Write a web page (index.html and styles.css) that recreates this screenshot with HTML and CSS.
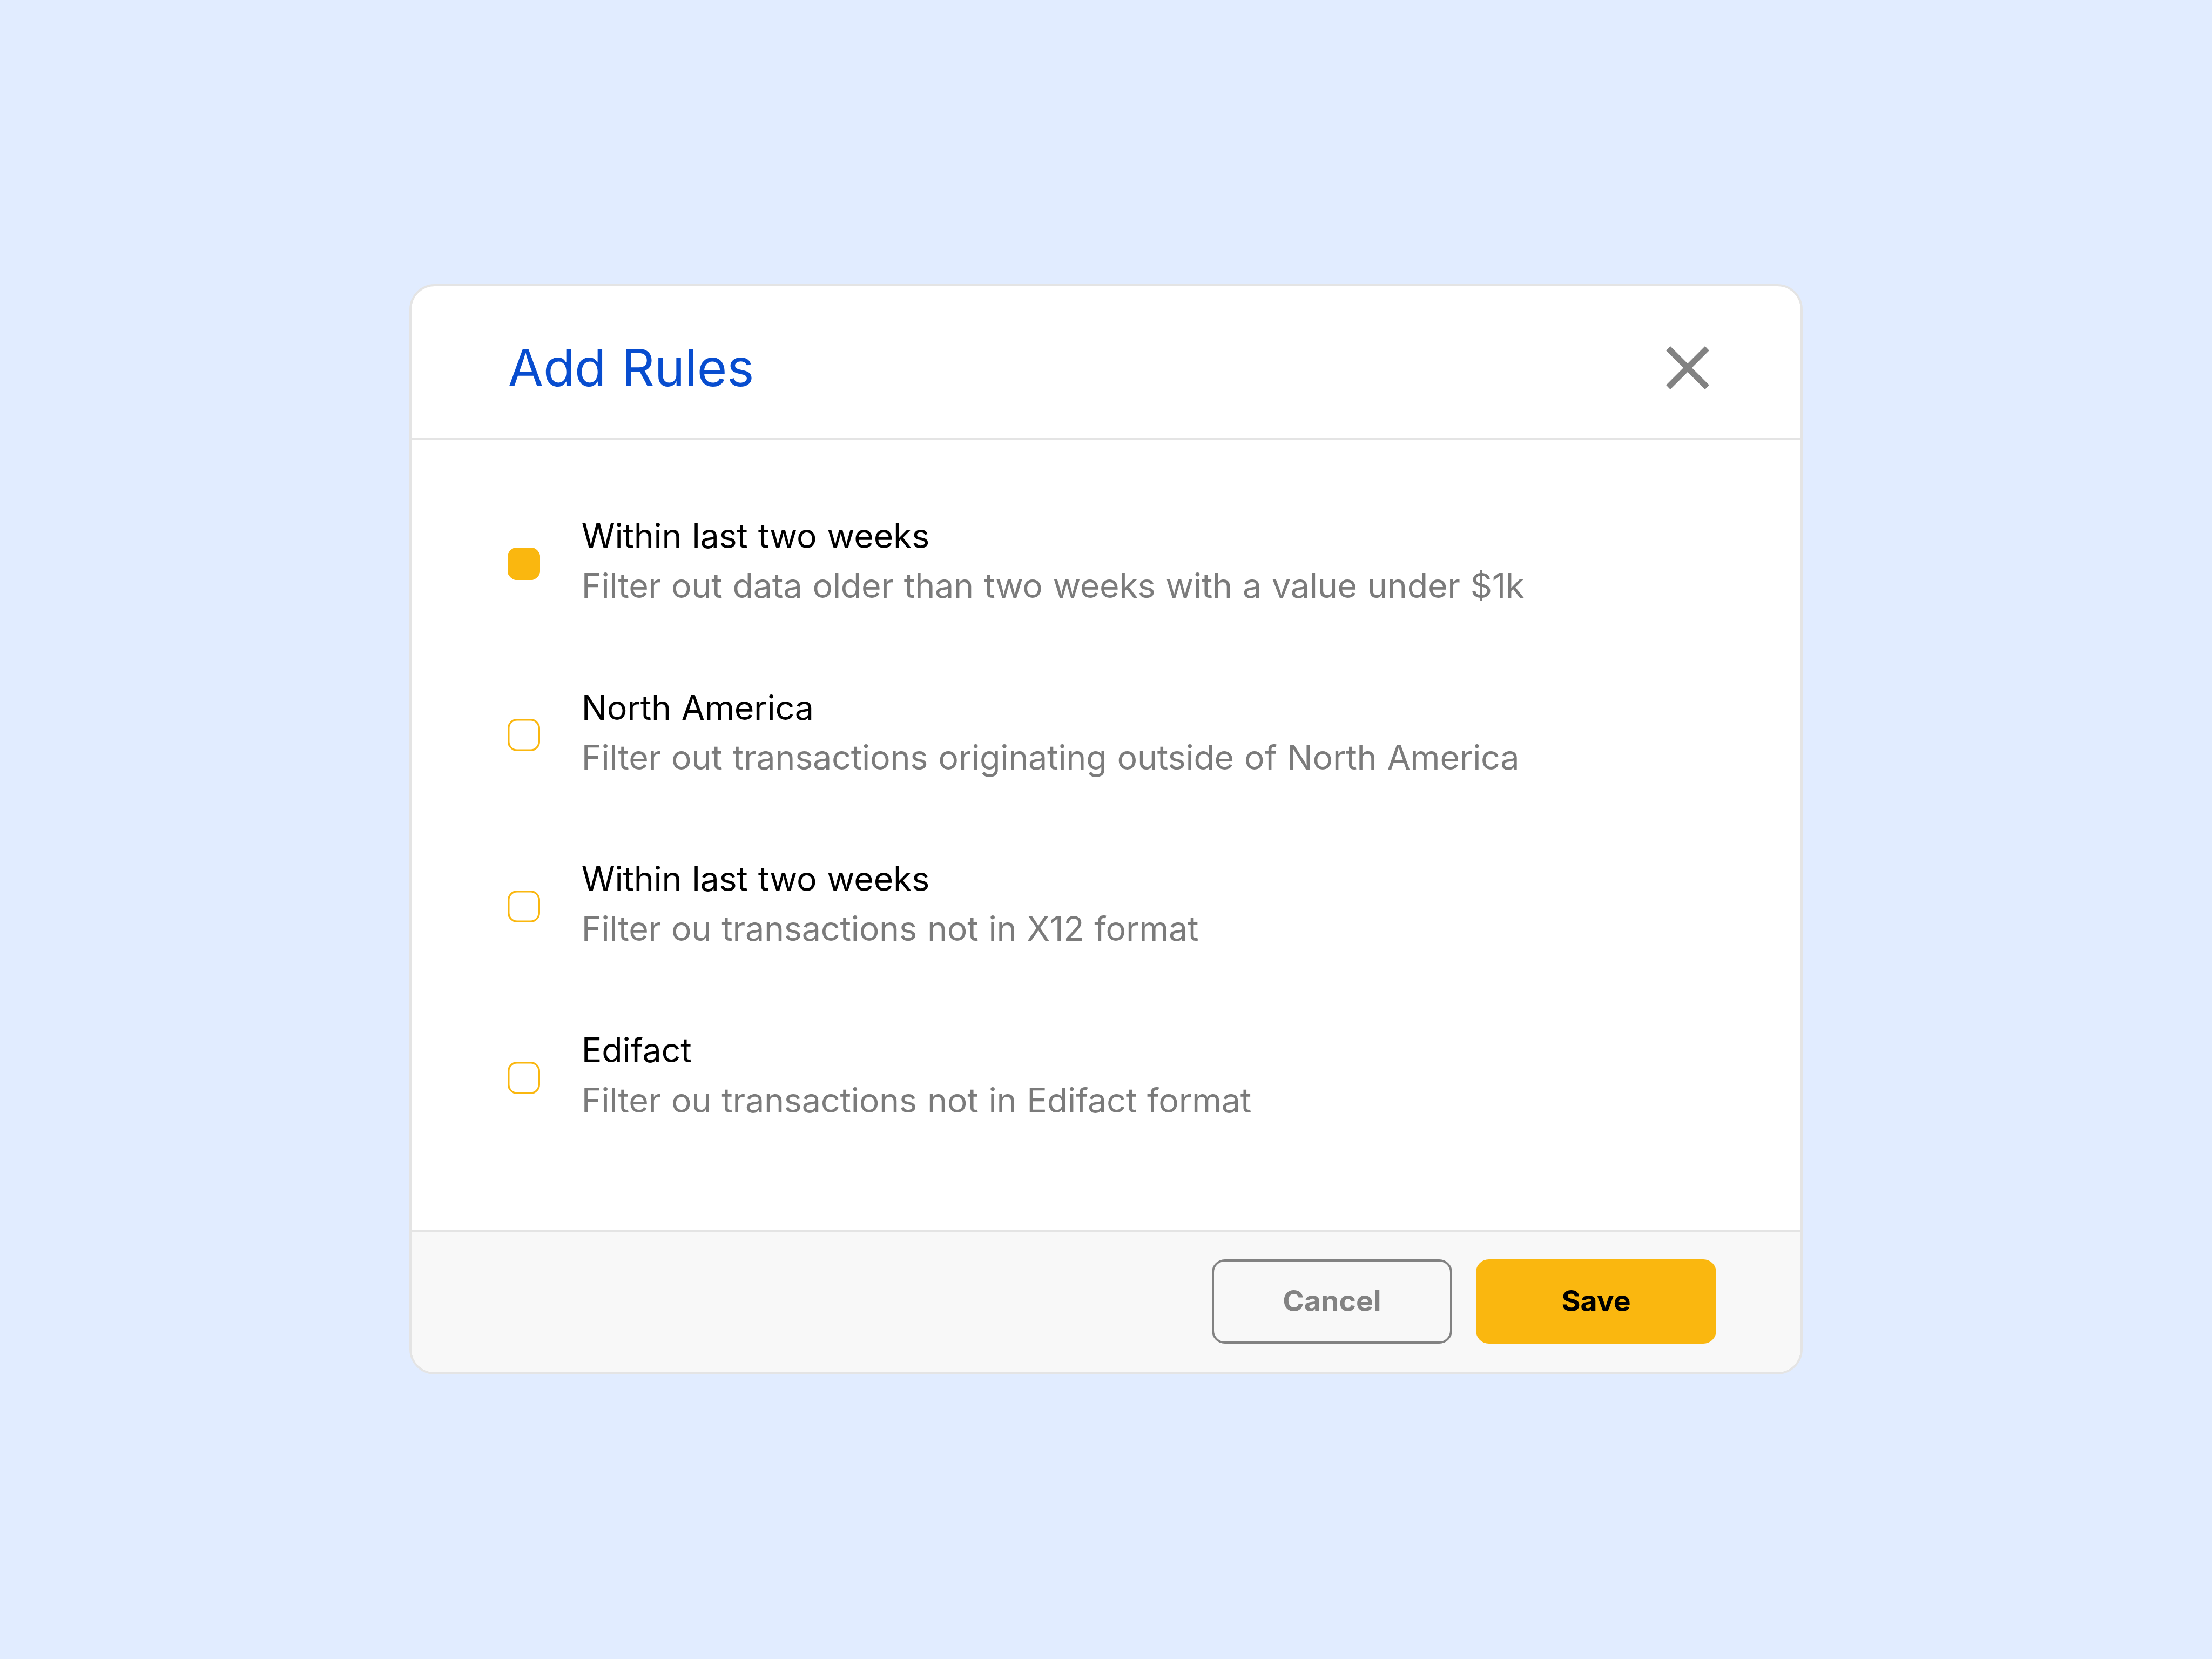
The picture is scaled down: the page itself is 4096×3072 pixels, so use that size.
FILE: index.html
```
<!DOCTYPE html>
<html lang="en">
<head>
<meta charset="utf-8">
<title>Add Rules</title>
<link rel="stylesheet" href="styles.css">
</head>
<body>
<section class="dialog" role="dialog" aria-labelledby="dialog-title">
  <header class="dialog-header">
    <h1 class="dialog-title" id="dialog-title">Add Rules</h1>
    <svg class="close" viewBox="0 0 80 80" role="img" aria-label="Close">
      <path d="M4 4 L76 76 M76 4 L4 76" fill="none" stroke="#828282" stroke-width="11"/>
    </svg>
  </header>
  <div class="rules">
    <div class="rule">
      <span class="checkbox checked"></span>
      <div class="rule-text">
        <p class="rule-name">Within last two weeks</p>
        <p class="rule-description">Filter out data older than two weeks with a value under $1k</p>
      </div>
    </div>
    <div class="rule">
      <span class="checkbox"></span>
      <div class="rule-text">
        <p class="rule-name">North America</p>
        <p class="rule-description">Filter out transactions originating outside of North America</p>
      </div>
    </div>
    <div class="rule">
      <span class="checkbox"></span>
      <div class="rule-text">
        <p class="rule-name">Within last two weeks</p>
        <p class="rule-description">Filter ou transactions not in X12 format</p>
      </div>
    </div>
    <div class="rule">
      <span class="checkbox"></span>
      <div class="rule-text">
        <p class="rule-name">Edifact</p>
        <p class="rule-description">Filter ou transactions not in Edifact format</p>
      </div>
    </div>
  </div>
  <footer class="dialog-footer">
    <button class="button cancel" type="button">Cancel</button>
    <button class="button save" type="button">Save</button>
  </footer>
</section>
</body>
</html>
```
FILE: styles.css
```
* {
  box-sizing: border-box;
}

body {
  display: flex;
  justify-content: center;
  align-items: flex-start;
  width: 4096px;
  height: 3072px;
  margin: 0;
  padding-top: 526px;
  background: #e1ecff;
  font-family: Inter, sans-serif;
}

h1,
p {
  margin: 0;
  font-weight: 400;
}

.dialog {
  display: flex;
  flex-direction: column;
  width: 2580px;
  height: 2019px;
  overflow: hidden;
  border: 4px solid #e4e4e4;
  border-radius: 47px;
  background: #fff;
}

.dialog-header {
  display: flex;
  flex: none;
  align-items: center;
  justify-content: space-between;
  height: 285px;
  padding: 20px 169.3px 0 178.4px;
  border-bottom: 4px solid #e4e4e4;
}

.dialog-title {
  color: #084dcf;
  font-size: 95.4px;
  line-height: 116px;
  letter-spacing: -0.3px;
  word-spacing: 2px;
}

.close {
  width: 80px;
  height: 80px;
  margin-top: 1px;
}

.rules {
  display: flex;
  flex: 1;
  flex-direction: column;
  gap: 133px;
  padding: 131.2px 178px 0 178.4px;
}

.rule {
  display: flex;
  gap: 76.6px;
  height: 184.4px;
}

.checkbox {
  flex: none;
  width: 59.8px;
  height: 59.8px;
  margin-top: 67.6px;
  border-radius: 17.5px;
  box-shadow: inset 0 0 0 3.5px #fab70f;
}

.checked {
  background: #fab70f;
}

.rule-name,
.rule-description {
  font-size: 62.8px;
  line-height: 92.2px;
  letter-spacing: -0.24px;
  word-spacing: 1.6px;
  white-space: nowrap;
}

.rule-name {
  color: #000;
}

.rule-description {
  color: #7b7b7b;
}

.dialog-footer {
  display: flex;
  flex: none;
  justify-content: flex-end;
  gap: 44px;
  height: 263px;
  padding: 49.6px 155.8px 0;
  border-top: 4px solid #e4e4e4;
  background: #f8f8f8;
}

.button {
  width: 445.2px;
  height: 156.2px;
  padding: 0 0 1.5px;
  border: 0;
  border-radius: 24px;
  font: 700 53.6px/65px Inter, sans-serif;
}

.cancel {
  border: 4px solid #828282;
  background: transparent;
  color: #828282;
}

.save {
  background: #fab70f;
  color: #000;
}
```
